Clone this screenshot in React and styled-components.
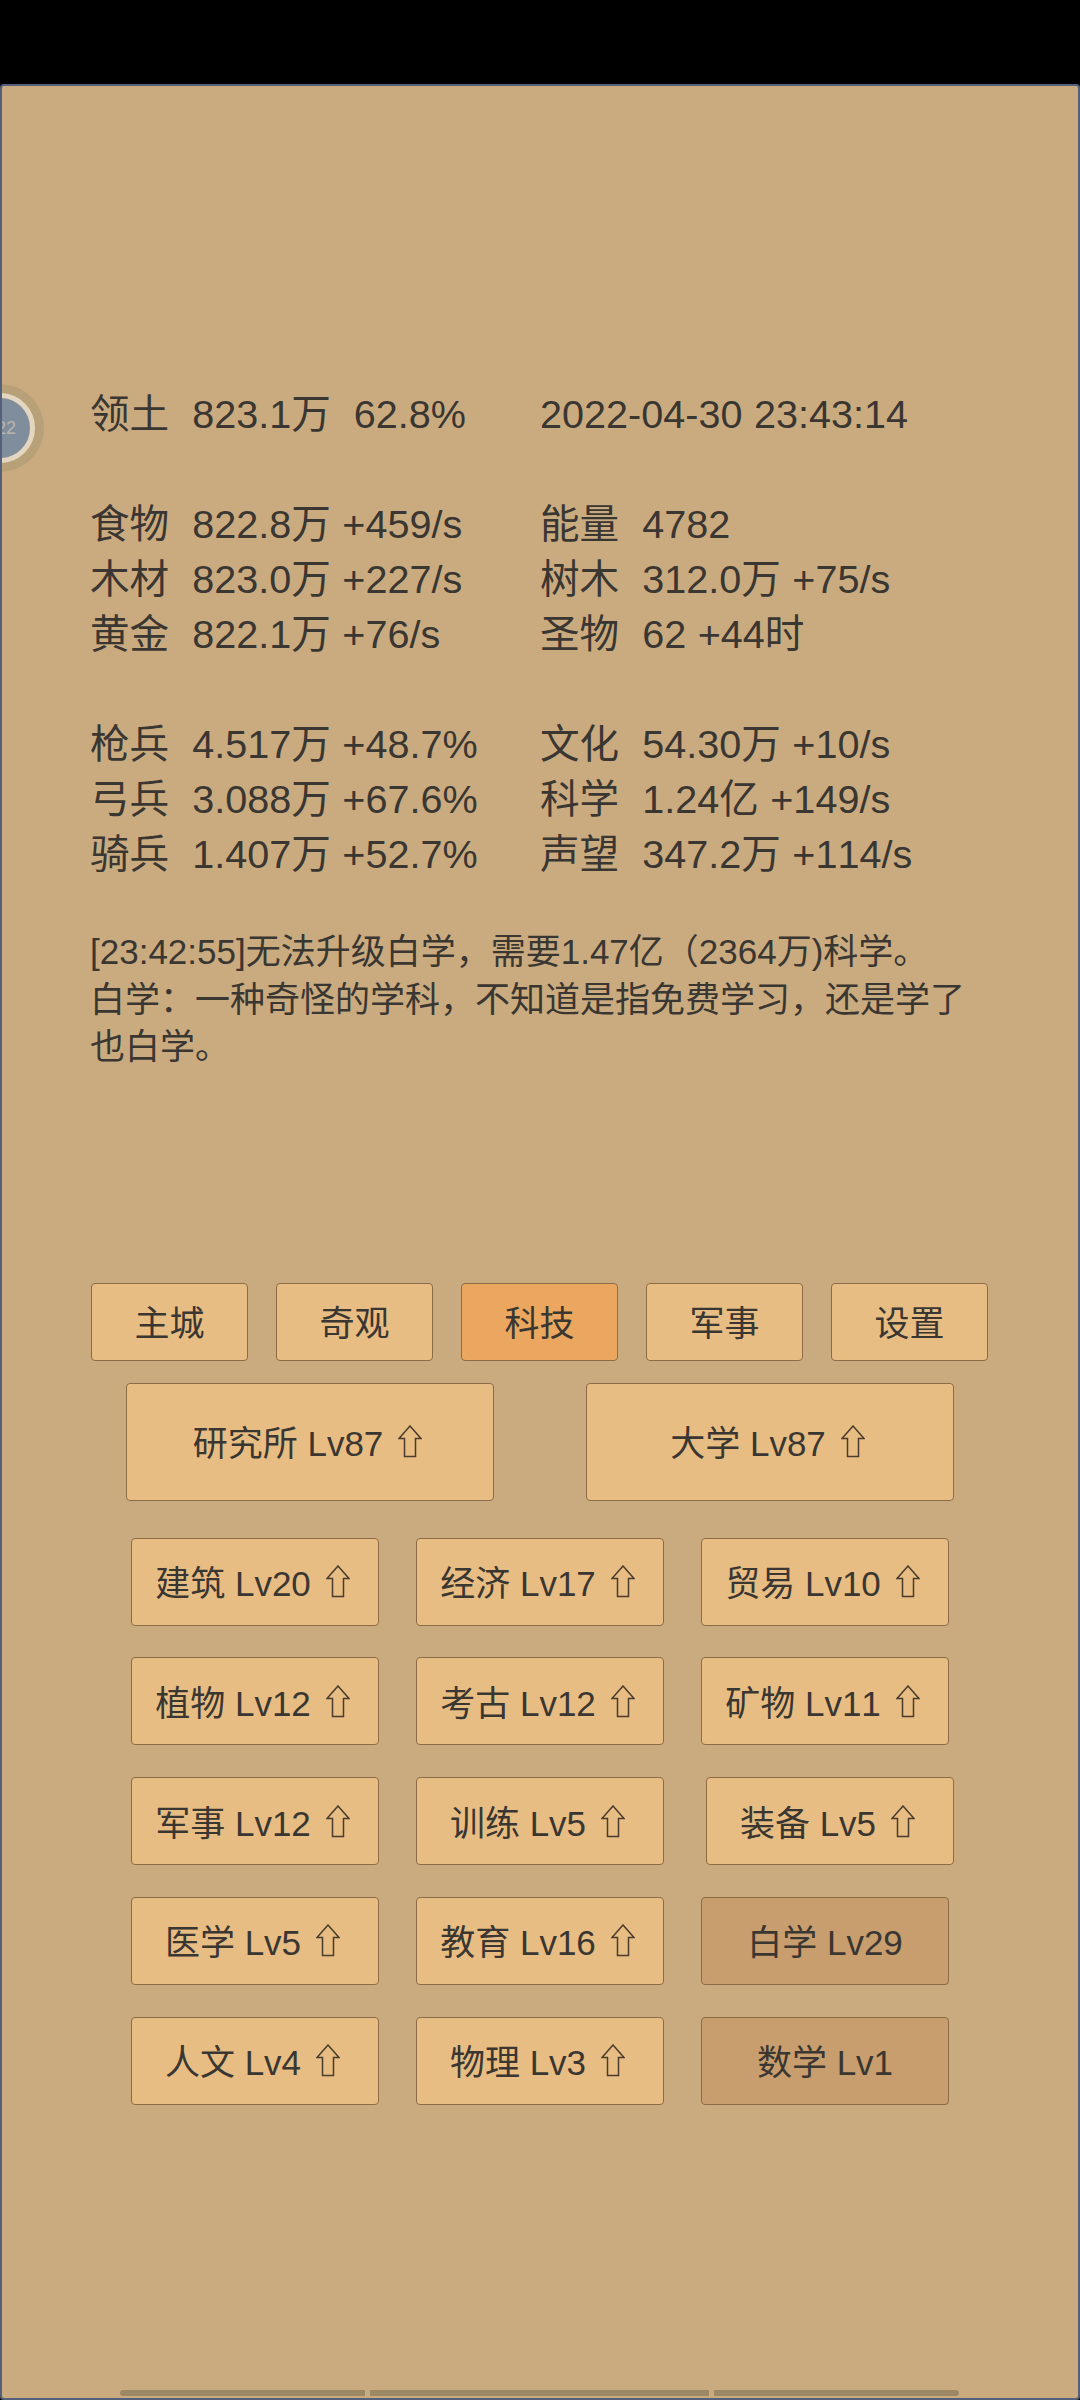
import styled, {createGlobalStyle} from 'styled-components'

const GlobalStyle = createGlobalStyle`
  html, body {
    margin: 0;
    padding: 0;
    background: #000;
  }
  body {
    font-family: "Liberation Sans", "Noto Sans CJK SC", sans-serif;
    font-kerning: none;
  }
`

const topStats = [['领土  823.1万  62.8%', '2022-04-30 23:43:14']]
const resourceStats = [
  ['食物  822.8万 +459/s', '能量  4782'],
  ['木材  823.0万 +227/s', '树木  312.0万 +75/s'],
  ['黄金  822.1万 +76/s', '圣物  62 +44时'],
]
const armyStats = [
  ['枪兵  4.517万 +48.7%', '文化  54.30万 +10/s'],
  ['弓兵  3.088万 +67.6%', '科学  1.24亿 +149/s'],
  ['骑兵  1.407万 +52.7%', '声望  347.2万 +114/s'],
]

const tabs = ['主城', '奇观', '科技', '军事', '设置']

const techRows = [
  [['建筑 Lv20'], ['经济 Lv17'], ['贸易 Lv10']],
  [['植物 Lv12'], ['考古 Lv12'], ['矿物 Lv11']],
  [['军事 Lv12'], ['训练 Lv5'], ['装备 Lv5']],
  [['医学 Lv5'], ['教育 Lv16'], ['白学 Lv29', true]],
  [['人文 Lv4'], ['物理 Lv3'], ['数学 Lv1', true]],
]

const UpArrow = () => (
  <ArrowIcon viewBox="0 0 24 33" width="24" height="33">
    <path d="M12 1 L23 13.5 H17.5 V31.5 H6.5 V13.5 H1 Z" fill="none" stroke="#4a3c2c" strokeWidth="1.5" strokeLinejoin="miter" />
  </ArrowIcon>
)

const StatBlock = ({rows}) => (
  <StatGroup>
    {rows.map(([left, right]) => (
      <StatRow key={left}>
        <span>{left}</span>
        <span>{right}</span>
      </StatRow>
    ))}
  </StatGroup>
)

const App = () => {
  return (
    <Screen>
      <GlobalStyle />
      <StatusBar />
      <Panel>
        <Bubble>
          <BubbleLabel>22</BubbleLabel>
        </Bubble>
        <Stats>
          <StatBlock rows={topStats} />
          <StatBlock rows={resourceStats} />
          <StatBlock rows={armyStats} />
        </Stats>
        <Log>
          [23:42:55]无法升级白学，需要1.47亿（2364万)科学。
          <br />
          白学：一种奇怪的学科，不知道是指免费学习，还是学了
          <br />
          也白学。
        </Log>
        <TabRow>
          {tabs.map((tab) => (
            <TabButton key={tab} $active={tab === '科技'}>
              {tab}
            </TabButton>
          ))}
        </TabRow>
        <BigRow>
          <BigButton>
            研究所 Lv87
            <UpArrow />
          </BigButton>
          <BigButton>
            大学 Lv87
            <UpArrow />
          </BigButton>
        </BigRow>
        <TechGrid>
          {techRows.map((row, i) => (
            <TechRow key={i}>
              {row.map(([label, maxed], j) => (
                <TechButton key={label} $maxed={maxed} $shifted={i === 2 && j === 2}>
                  {label}
                  {!maxed && <UpArrow />}
                </TechButton>
              ))}
            </TechRow>
          ))}
        </TechGrid>
        <Pager>
          <PagerLeft />
          <PagerMiddle />
          <PagerRight />
        </Pager>
      </Panel>
    </Screen>
  )
}

const Screen = styled.div`
  width: 1080px;
  height: 2400px;
  display: flex;
  flex-direction: column;
  overflow: hidden;
  background: #000;
`

const StatusBar = styled.div`
  height: 84px;
  flex: none;
  background: #000;
`

const Panel = styled.div`
  flex: 1;
  position: relative;
  display: flex;
  flex-direction: column;
  box-sizing: border-box;
  padding-top: 301px;
  background: #caab80;
  border: 2px solid #55617a;
  border-radius: 4px;
  color: #3a3631;
  overflow: hidden;
`

const Bubble = styled.div`
  position: absolute;
  left: -37px;
  top: 307px;
  width: 60px;
  height: 60px;
  border-radius: 50%;
  border: 5px solid #e4d6bf;
  background: #7f8d9c;
  box-shadow: 0 0 0 9px #b8a079;
  display: flex;
  align-items: center;
  justify-content: flex-end;
`

const BubbleLabel = styled.span`
  font-size: 18px;
  color: #b9b6aa;
  margin-right: 14px;
`

const Stats = styled.div`
  display: flex;
  flex-direction: column;
  gap: 55px;
  padding-left: 88px;
  font-size: 39.6px;
  word-spacing: 0.5px;
  line-height: 55px;
`

const StatGroup = styled.div`
  display: flex;
  flex-direction: column;
`

const StatRow = styled.div`
  display: grid;
  grid-template-columns: 450px 1fr;
  white-space: pre;
`

const Log = styled.div`
  margin-top: 46px;
  padding-left: 88px;
  font-size: 35px;
  line-height: 47.5px;
  white-space: nowrap;
`

const TabRow = styled.div`
  display: flex;
  gap: 28px;
  margin-top: 212px;
  padding-left: 89px;
`

const Button = styled.div`
  display: flex;
  align-items: center;
  justify-content: center;
  box-sizing: border-box;
  flex: none;
  padding-bottom: 2px;
  border: 1px solid #8b6c46;
  border-radius: 4px;
  background: #e8bd83;
  font-size: 35px;
  white-space: pre;
`

const TabButton = styled(Button)`
  width: 157px;
  height: 78px;
  background: ${(p) => (p.$active ? '#eba75f' : '#e8bd83')};
`

const BigRow = styled.div`
  display: flex;
  gap: 92px;
  margin-top: 22px;
  padding-left: 124px;
`

const BigButton = styled(Button)`
  width: 368px;
  height: 118px;
`

const TechGrid = styled.div`
  display: flex;
  flex-direction: column;
  gap: 31.8px;
  margin-top: 37px;
  padding-left: 129px;
`

const TechRow = styled.div`
  display: flex;
  gap: 37px;
`

const TechButton = styled(Button)`
  width: 248px;
  height: 88px;
  margin-left: ${(p) => (p.$shifted ? '5px' : '0')};
  background: ${(p) => (p.$maxed ? '#c89e6e' : '#e8bd83')};
`

const ArrowIcon = styled.svg`
  flex: none;
  margin-left: 15px;
  margin-right: 5px;
  margin-top: 2px;
`

const Pager = styled.div`
  display: flex;
  gap: 5px;
  margin-top: auto;
  margin-bottom: 2px;
  padding-left: 118px;
`

const PagerBar = styled.div`
  height: 6px;
  background: #9d8866;
`

const PagerLeft = styled(PagerBar)`
  width: 245px;
  border-radius: 3px 0 0 3px;
`

const PagerMiddle = styled(PagerBar)`
  width: 339px;
`

const PagerRight = styled(PagerBar)`
  width: 245px;
  border-radius: 0 3px 3px 0;
`

export default App
